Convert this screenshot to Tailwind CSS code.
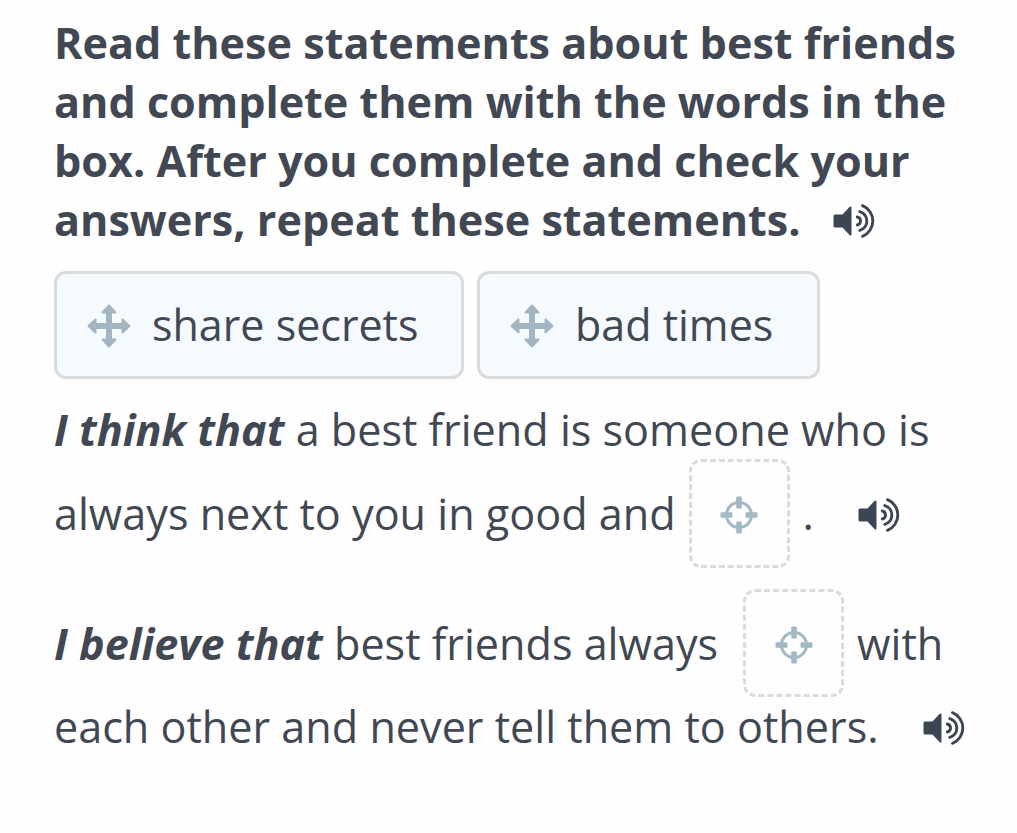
<!DOCTYPE html>
<html lang="en">
<head>
    <meta charset="UTF-8">
    <meta name="viewport" content="width=device-width, initial-scale=1.0">
    <title>Best friends</title>
    <script src="https://cdn.jsdelivr.net/npm/@tailwindcss/browser@4"></script>
</head>
<body class="bg-[#fefefe] min-h-screen text-[#414853] font-['Open_Sans',sans-serif] text-[43.15px] leading-[59px] whitespace-nowrap">
    <!-- Shared icons -->
    <svg class="hidden">
        <symbol id="speaker" viewBox="0 0 42 36">
            <path d="M2 11.500h7.500L16.500 4q2-1.500 2 .8v26.400q0 2.300-2 .8L9.500 24.500H2q-1.500 0-1.500-1.500V13q0-1.500 1.500-1.500z" fill="#3c4553"/>
            <path d="M24.300 14a4.100 4.100 0 0 1 0 8M26.800 8.600a9.800 9.800 0 0 1 0 18.800M29.500 2.700a16.500 16.500 0 0 1 0 30.600" fill="none" stroke="#3c4553" stroke-width="2.900" stroke-linecap="round"/>
        </symbol>
        <symbol id="move" viewBox="0 0 44 44">
            <path d="M22 4v36M4 22h36" stroke="#a3b5c2" stroke-width="6"/>
            <path d="M22 1.500L28.500 8.500H15.500zM22 42.500L28.500 35.500H15.500zM1.500 22L8.500 15.500V28.500zM42.500 22L35.500 15.500V28.500z" fill="#a3b5c2" stroke="#a3b5c2" stroke-width="2" stroke-linejoin="round"/>
        </symbol>
        <symbol id="target" viewBox="0 0 38 38">
            <circle cx="19" cy="19" r="12.500" fill="none" stroke="#a3b8c5" stroke-width="3"/>
            <path d="M16.200 1.500q0-1 1-1h3.600q1 0 1 1v10q0 1-1 1h-3.600q-1 0-1-1zM16.200 26.500q0-1 1-1h3.600q1 0 1 1v10q0 1-1 1h-3.600q-1 0-1-1zM1.500 16.200h10q1 0 1 1v3.600q0 1-1 1h-10q-1 0-1-1v-3.600q0-1 1-1zM26.500 16.200h10q1 0 1 1v3.600q0 1-1 1h-10q-1 0-1-1v-3.600q0-1 1-1z" fill="#a3b8c5"/>
        </symbol>
    </svg>

    <main class="pl-[54px] pt-[13px]">
        <h1 class="font-bold">
            Read these statements about best friends<br>
            and complete them with the words in the<br>
            box. After you complete and check your
            <span class="flex items-center">answers, repeat these statements.
                <svg class="w-[42px] h-9 ml-8 mt-0.5"><use href="#speaker"/></svg>
            </span>
        </h1>

        <!-- Word box -->
        <div class="flex gap-[13px] mt-[22px] text-[43px]">
            <div class="w-[410px] h-[108px] flex items-center pl-[30px] rounded-xl border-3 border-[#d6dcdf] bg-[#f5fafe]">
                <svg class="w-11 h-11 mr-[21px] mt-0.5"><use href="#move"/></svg>
                <span class="pb-0.5">share secrets</span>
            </div>
            <div class="w-[343px] h-[108px] flex items-center pl-[30px] rounded-xl border-3 border-[#d6dcdf] bg-[#f5fafe]">
                <svg class="w-11 h-11 mr-[21px] mt-0.5"><use href="#move"/></svg>
                <span class="pb-0.5">bad times</span>
            </div>
        </div>

        <!-- Statements -->
        <p class="mt-[21px]"><b><i>I think that</i></b> a best friend is someone who is</p>
        <div class="flex items-center h-[109px]">
            <span>always next to you in good and</span>
            <span class="w-[101px] h-[109px] ml-[13px] mr-[13px] flex items-center justify-center rounded-xl border-3 border-dashed border-[#d6dcdf]">
                <svg class="w-[38px] h-[38px] mt-0.5"><use href="#target"/></svg>
            </span>
            <span>.</span>
            <svg class="w-[42px] h-9 ml-[44px] mt-0.5"><use href="#speaker"/></svg>
        </div>
        <div class="flex items-center h-[108px] mt-[21px]">
            <span><b><i>I believe that</i></b> best friends always</span>
            <span class="w-[101px] h-[108px] ml-[25px] mr-[13px] flex items-center justify-center rounded-xl border-3 border-dashed border-[#d6dcdf]">
                <svg class="w-[38px] h-[38px] mt-1"><use href="#target"/></svg>
            </span>
            <span>with</span>
        </div>
        <div class="flex items-center">
            <span>each other and never tell them to others.</span>
            <svg class="w-[42px] h-9 ml-[44px] mt-0.5"><use href="#speaker"/></svg>
        </div>
    </main>
</body>
</html>
